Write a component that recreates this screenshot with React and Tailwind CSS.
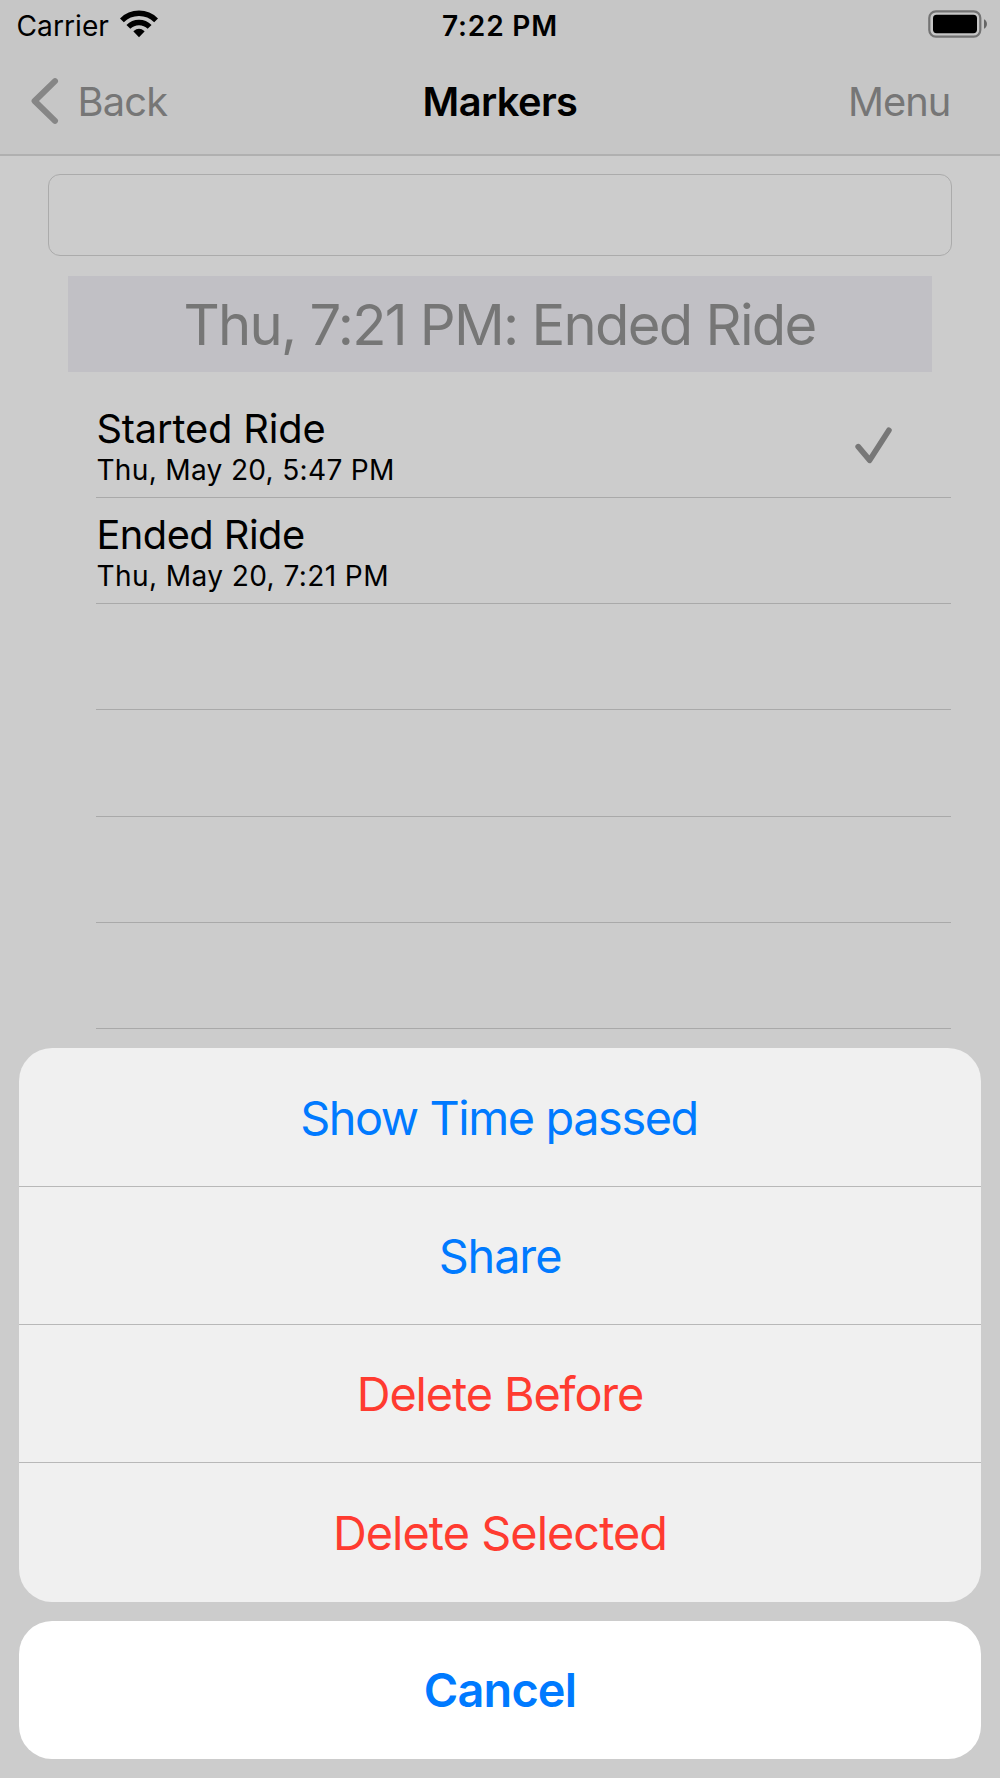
import React from "react";

const markers = [
  {
    title: "Started Ride",
    titleSpacing: "tracking-[-0.15px]",
    date: "Thu, May 20, 5:47 PM",
    dateSpacing: "tracking-[0.3px]",
    checked: true,
  },
  {
    title: "Ended Ride",
    titleSpacing: "tracking-[-0.52px]",
    date: "Thu, May 20, 7:21 PM",
    dateSpacing: "tracking-[0.39px]",
  },
  {},
  {},
  {},
  {},
];

const actions = [
  { label: "Show Time passed", style: "pt-[2px] pr-[2px] text-[#007aff] tracking-[-1.4px]" },
  { label: "Share", style: "pt-[2px] text-[#007aff] tracking-[-1.08px]" },
  { label: "Delete Before", style: "pt-px text-[#ff3b30] tracking-[-1.12px]" },
  { label: "Delete Selected", style: "text-[#ff3b30] tracking-[-0.95px]" },
];

function WifiIcon() {
  return (
    <svg width="38" height="28" viewBox="0 0 38 28" className="block">
      <g fill="none" stroke="#000">
        <path d="M1.9 10.4A24.2 24.2 0 0 1 36.1 10.4" strokeWidth="5.5" />
        <path d="M8.4 16.9A15 15 0 0 1 29.6 16.9" strokeWidth="5.5" />
      </g>
      <path d="M19 27.2L13.5 21.6Q13.3 21.2 13.7 20.9A8.6 8.6 0 0 1 24.3 20.9Q24.7 21.2 24.5 21.6Z" />
    </svg>
  );
}

function BatteryIcon() {
  return (
    <svg width="60" height="28" viewBox="0 0 60 28" className="block">
      <rect x="1.3" y="1.3" width="51" height="25.4" rx="6.6" fill="none" stroke="#737373" strokeWidth="2.2" />
      <rect x="5" y="4.8" width="44" height="18.4" rx="3.6" />
      <path d="M56 9.2A5.4 5.4 0 0 1 56 18.8Z" fill="#666" />
    </svg>
  );
}

function StatusBar() {
  return (
    <div className="grid h-[51px] grid-cols-3 items-center text-[28.1px] leading-9">
      <div className="flex items-center pl-[16.5px]">
        <span className="tracking-[0.05px]">Carrier</span>
        <span className="-mt-1 ml-[10.6px]">
          <WifiIcon />
        </span>
      </div>
      <div className="text-center font-semibold tracking-[0.8px]">7:22 PM</div>
      <div className="-mt-[3px] flex justify-end pr-3">
        <BatteryIcon />
      </div>
    </div>
  );
}

function NavBar() {
  return (
    <div className="grid h-[101px] grid-cols-3 items-center text-[39.8px] leading-[48px]">
      <div className="flex items-center pl-[30px] text-[#767676]">
        <svg width="30" height="48" viewBox="0 0 30 48" className="-mt-px block">
          <path
            d="M25 4.2L4.6 24L25 43.8"
            fill="none"
            stroke="#868686"
            strokeWidth="6"
            strokeLinecap="round"
            strokeLinejoin="round"
          />
        </svg>
        <span className="ml-[17.5px] tracking-[-0.8px]">Back</span>
      </div>
      <h1 className="text-center font-semibold tracking-[-0.6px]">Markers</h1>
      <div className="pr-[49.7px] text-right tracking-[-1px] text-[#767676]">Menu</div>
    </div>
  );
}

function MarkerRow({ marker }) {
  return (
    <li className="flex h-[106.2px] items-start justify-between border-b border-[#a9a9a9] pt-[16.2px] pr-[59.5px]">
      <div>
        <div className={`text-[39.8px] leading-[42px] ${marker.titleSpacing ?? ""}`}>{marker.title}</div>
        <div className={`mt-[2.3px] text-[28.1px] leading-9 ${marker.dateSpacing ?? ""}`}>{marker.date}</div>
      </div>
      {marker.checked && (
        <svg width="38" height="38" viewBox="0 0 38 38" className="mt-[18px] block">
          <path
            d="M4.2 20.7L15.6 34.2L34.9 4.3"
            fill="none"
            stroke="#777"
            strokeWidth="5.7"
            strokeLinecap="round"
            strokeLinejoin="round"
          />
        </svg>
      )}
    </li>
  );
}

function ActionSheet() {
  return (
    <div className="absolute inset-x-0 bottom-0 flex flex-col gap-[19px] px-[19.3px] pb-[19.3px] text-[46.8px] leading-[56px]">
      <div className="overflow-hidden rounded-[33px] bg-[#f0f0f0]">
        {actions.map((action) => (
          <button
            key={action.label}
            className={`flex h-[138.4px] w-full items-center justify-center border-b border-[#b8b8b8] last:border-b-0 ${action.style}`}
          >
            {action.label}
          </button>
        ))}
      </div>
      <button className="h-[138px] rounded-[33px] bg-white font-semibold tracking-[-0.78px] text-[#007aff]">
        Cancel
      </button>
    </div>
  );
}

export default function App() {
  return (
    <div className="relative h-[1778px] w-[1000px] overflow-hidden bg-[#ccc] font-['Inter',sans-serif] text-black">
      <header className="h-[156px] border-b-2 border-[#b0b0b0] bg-[#c6c6c6]">
        <StatusBar />
        <NavBar />
      </header>
      <main className="pt-[18px]">
        <input className="mx-auto block h-[82px] w-[904px] rounded-[12px] border border-[#ababab] bg-transparent px-4 text-[39.8px] outline-none" />
        <div className="mx-auto mt-[19.5px] flex h-24 w-[864px] items-center justify-center bg-[#c1c0c5] pt-0.5 pr-px text-[56.2px] leading-[68px] tracking-[-1.73px] text-[#767676]">
          Thu, 7:21 PM: Ended Ride
        </div>
        <ul className="mt-[20.3px] mr-[48.6px] ml-[96.4px]">
          {markers.map((marker, i) => (
            <MarkerRow key={i} marker={marker} />
          ))}
        </ul>
      </main>
      <ActionSheet />
    </div>
  );
}
